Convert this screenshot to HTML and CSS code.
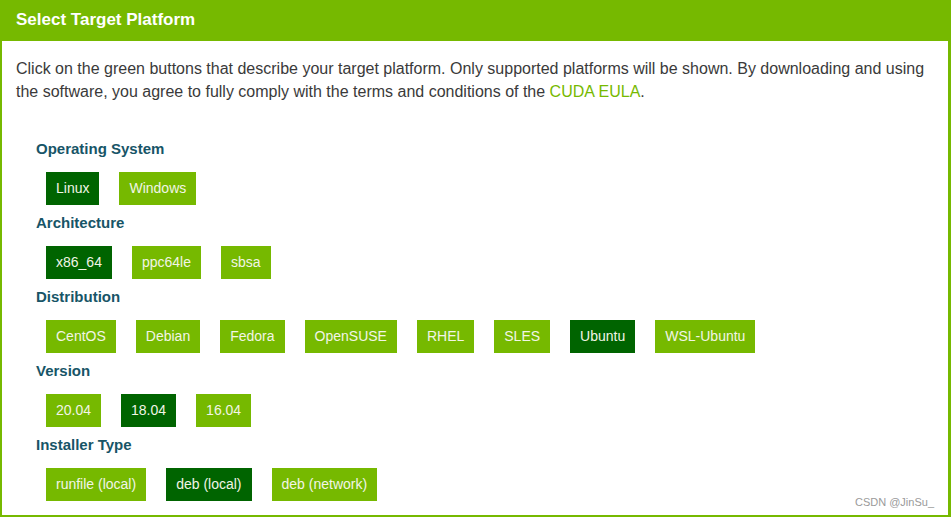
FILE: index.html
```html
<!DOCTYPE html>
<html lang="en">
<head>
    <meta charset="UTF-8">
    <meta name="viewport" content="width=device-width, initial-scale=1.0">
    <title>Select Target Platform</title>
    <link rel="stylesheet" href="styles.css">
</head>
<body>
    <div class="panel">
        <div class="panel-header">Select Target Platform</div>
        <div class="panel-body">
            <p class="intro">Click on the green buttons that describe your target platform. Only supported platforms will be shown. By downloading and using the software, you agree to fully comply with the terms and conditions of the <a href="#">CUDA EULA</a>.</p>

            <div class="selector">
                <div class="row-label">Operating System</div>
                <div class="options">
                    <span class="option active">Linux</span>
                    <span class="option">Windows</span>
                </div>

                <div class="row-label">Architecture</div>
                <div class="options">
                    <span class="option active">x86_64</span>
                    <span class="option">ppc64le</span>
                    <span class="option">sbsa</span>
                </div>

                <div class="row-label">Distribution</div>
                <div class="options">
                    <span class="option">CentOS</span>
                    <span class="option">Debian</span>
                    <span class="option">Fedora</span>
                    <span class="option">OpenSUSE</span>
                    <span class="option">RHEL</span>
                    <span class="option">SLES</span>
                    <span class="option active">Ubuntu</span>
                    <span class="option">WSL-Ubuntu</span>
                </div>

                <div class="row-label">Version</div>
                <div class="options">
                    <span class="option">20.04</span>
                    <span class="option active">18.04</span>
                    <span class="option">16.04</span>
                </div>

                <div class="row-label">Installer Type</div>
                <div class="options">
                    <span class="option">runfile (local)</span>
                    <span class="option active">deb (local)</span>
                    <span class="option">deb (network)</span>
                </div>
            </div>
        </div>
        <span class="watermark">CSDN @JinSu_</span>
    </div>
</body>
</html>
```

FILE: styles.css
```css
body {
    margin: 0;
    font-family: "Liberation Sans", Arial, sans-serif;
    background: #fff;
    color: #333;
}
.panel {
    position: relative;
    box-sizing: border-box;
    height: 100vh;
    border: 2px solid #76b900;
    border-top: 0;
    border-right-width: 3px;
}
.panel-header {
    background-color: #76b900;
    color: #fff;
    font-weight: bold;
    font-size: 17px;
    height: 41px;
    line-height: 40px;
    margin: 0 -3px 0 -2px;
    padding-left: 16px;
}
.panel-body {
    padding: 0 14px;
}
.intro {
    margin: 16px 0 0;
    font-size: 16px;
    line-height: 23px;
    color: #3a3a3a;
}
.intro a {
    color: #76b900;
    text-decoration: none;
}
.selector {
    padding: 36px 0 0 20px;
}
.row-label {
    font-weight: bold;
    font-size: 15px;
    line-height: 20px;
    color: #175567;
}
.options {
    display: flex;
    gap: 20px;
    padding-left: 10px;
    margin: 13px 0 8px;
}
.option {
    background-color: #76b900;
    color: #f2f5e6;
    font-size: 14px;
    height: 33px;
    line-height: 33px;
    padding: 0 10px;
}
.option.active {
    background-color: #006400;
}
.watermark {
    position: absolute;
    right: 14px;
    bottom: 7px;
    font-size: 11px;
    color: #9a9a9a;
}
```
